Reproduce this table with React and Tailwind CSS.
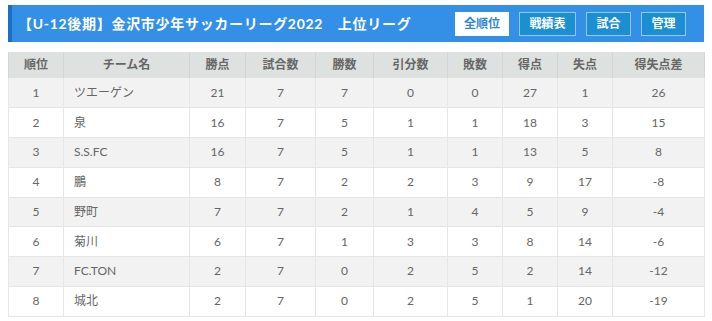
const rows = [
  [1, 'ツエーゲン', 21, 7, 7, 0, 0, 27, 1, 26],
  [2, '泉', 16, 7, 5, 1, 1, 18, 3, 15],
  [3, 'S.S.FC', 16, 7, 5, 1, 1, 13, 5, 8],
  [4, '鵬', 8, 7, 2, 2, 3, 9, 17, -8],
  [5, '野町', 7, 7, 2, 1, 4, 5, 9, -4],
  [6, '菊川', 6, 7, 1, 3, 3, 8, 14, -6],
  [7, 'FC.TON', 2, 7, 0, 2, 5, 2, 14, -12],
  [8, '城北', 2, 7, 0, 2, 5, 1, 20, -19],
];

const headers = ['順位', 'チーム名', '勝点', '試合数', '勝数', '引分数', '敗数', '得点', '失点', '得失点差'];
const widths = ['w-[55px]', 'w-[126px]', 'w-[56px]', 'w-[70px]', 'w-[58px]', 'w-[74px]', 'w-[55px]', 'w-[55px]', 'w-[55px]', 'w-[92px]'];

export default function App() {
  return (
    <div className="bg-white w-[712px] h-[321px] px-2 pt-[5px] font-['Lato','Noto_Sans_CJK_JP',sans-serif]">
      {/* Title bar */}
      <div className="h-[37px] bg-[#3490e6] border-l-4 border-[#1c6fc4] flex items-center pl-[6px] pr-[18px]">
        <h1 className="text-white font-bold text-[14px] tracking-[0.05em] flex-1">
          【U-12後期】金沢市少年サッカーリーグ2022　上位リーグ
        </h1>
        <div className="flex gap-[10px] items-center">
          <button className="h-[24px] w-[54px] bg-white text-[#2f86d6] font-bold text-[12px]">全順位</button>
          <button className="h-[24px] w-[57px] bg-[#1b8fd2] border border-[#8cc8f0] text-white font-bold text-[12px]">戦績表</button>
          <button className="h-[24px] w-[45px] bg-[#1b8fd2] border border-[#8cc8f0] text-white font-bold text-[12px]">試合</button>
          <button className="h-[24px] w-[45px] bg-[#1b8fd2] border border-[#8cc8f0] text-white font-bold text-[12px]">管理</button>
        </div>
      </div>

      {/* Standings */}
      <table className="mt-[10px] w-[696px] table-fixed border-collapse text-[12px] text-[#666] border-r border-[#d6d6d6]">
        <thead>
          <tr className="h-[26px] bg-[#dde2e0]">
            {headers.map((h, i) => (
              <th key={h} className={`${widths[i]} font-bold text-[#666] text-center border-x border-[#d2d7d5]`}>{h}</th>
            ))}
          </tr>
        </thead>
        <tbody>
          {rows.map((r, idx) => (
            <tr key={r[0]} className={`h-[29.75px] border-b border-[#e4e4e4] ${idx % 2 === 0 ? 'bg-[#f2f2f2]' : 'bg-white'}`}>
              {r.map((v, i) => (
                <td
                  key={i}
                  className={`border-x border-[#e6e6e6] ${i === 1 ? 'text-left pl-[10px]' : 'text-center'}`}
                >
                  {v}
                </td>
              ))}
            </tr>
          ))}
        </tbody>
      </table>
    </div>
  );
}
